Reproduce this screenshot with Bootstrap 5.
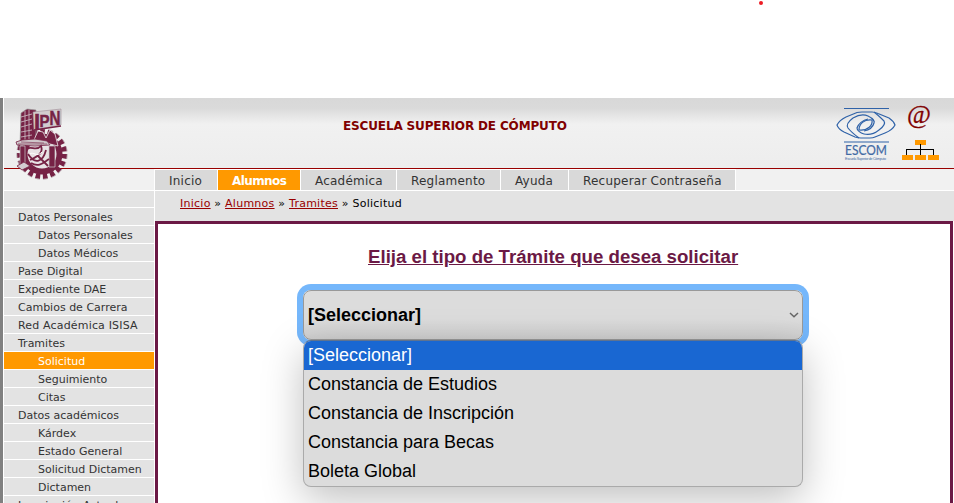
<!DOCTYPE html>
<html lang="es">
<head>
<meta charset="utf-8">
<meta name="viewport" content="width=device-width, initial-scale=1">
<title>Escuela Superior de Cómputo</title>
<link href="https://cdn.jsdelivr.net/npm/bootstrap@5.3.0/dist/css/bootstrap.min.css" rel="stylesheet">
<style>
body{font-family:"DejaVu Sans",sans-serif;font-size:11px;line-height:17px;color:#333;height:503px}
.page-shell{margin-top:98px;height:405px;border-left:3px solid gray;padding-left:1px}
.masthead{height:71px;border-bottom:1px solid #900;background:linear-gradient(#d8d8d8 0,#dadada 10px,#f1f1f1 26px,#ededed 100%)}
.ipn-logo{left:11px;top:10px;z-index:2}
.school{font-size:12px;font-weight:700;color:#800000;left:339px;top:19px;line-height:18px;letter-spacing:-.14px}
.escom-logo{left:831px;top:9px}
.at-link{left:903px;top:0;font:26px/34px "Liberation Serif",serif;color:#800000;-webkit-text-stroke:.3px #800000}
.map-icon{left:898px;top:42px}
.topbar{height:22px;background:#f1f1f1;border-bottom:1px solid #fff;padding-left:150px}
.topnav{border-left:1px solid #fff;border-top:1px solid #fff}
.topnav a{height:20px;line-height:22px;font-size:12px;letter-spacing:.22px;background:#d9d9d9;border-right:1px solid #fff;color:#333;text-decoration:none;white-space:nowrap;padding-left:14px}
.topnav a.on{background:#f90;color:#fff;font-weight:700;letter-spacing:-.6px}
.w1{width:63px}.w2{width:83px}.w3{width:96px}.w4{width:104px}.w5{width:68px}.w6{width:167px}
.side{width:151px;flex:none;background:#e3e3e3;border-right:1px solid #fff}
.side a{display:block;height:18px;border-bottom:1px solid #fff;line-height:19px;color:#333;text-decoration:none;padding-left:14px;white-space:nowrap}
.side a.blank{height:17px}
.side a.sub{padding-left:34px}
.side a.on{background:#f90;color:#fff}
.side a.wide{letter-spacing:.17px}
.crumbs{height:30px;background:#e3e3e3;padding-left:25px;line-height:25px;color:#000;white-space:pre;letter-spacing:.25px}
.crumbs a{color:#900;text-decoration:underline}
.panel{border:3px solid #6b1945;border-bottom:0;background:#fff;margin-right:1px;font-family:"Liberation Sans",Arial,sans-serif;color:#000;font-size:18px}
.ask{font-size:18.67px;line-height:22px;font-weight:700;color:#6b1945;margin:22px 0 0 210px;text-decoration:underline;white-space:nowrap}
.picker{width:500px;height:50px;margin:22px 0 0 145px;border:1px solid #999;border-radius:8px;box-shadow:0 0 0 6px #75b7fb;background:linear-gradient(#dcdcdc 0 60%,#cfcfcf);padding:0 3px 0 4px;font-weight:700}
.options{left:-1px;top:49px;width:500px;height:147px;border:1px solid #aaa;border-top-color:#5f7390;border-radius:8px;background:#dcdcdc;box-shadow:0 12px 40px rgba(0,0,0,.25);font-weight:400;z-index:1}
.options div{height:29px;line-height:29px;padding-left:4px}
.options .chosen{background:#1967d2;color:#fff}
.pen-dot{left:759px;top:1px;width:4px;height:4px;background:#ed1c24}
</style>
<script src="https://cdn.jsdelivr.net/npm/bootstrap@5.3.0/dist/js/bootstrap.bundle.min.js"></script>
</head>
<body class="overflow-hidden bg-white position-relative">
<span class="pen-dot position-absolute rounded-circle"></span>
<div class="page-shell d-flex flex-column overflow-hidden">
<header class="masthead position-relative flex-shrink-0">
<svg class="ipn-logo position-absolute" width="54" height="74" viewBox="0 0 54 74" fill="none">
<!-- gear wheel -->
<circle cx="27" cy="46" r="22.5" stroke="#762245" stroke-width="5" stroke-dasharray="4.6 2.8"/>
<circle cx="27" cy="46" r="17.5" fill="#e8e2e5" stroke="#762245" stroke-width="6"/>
<circle cx="27" cy="46" r="25.2" stroke="#a08b95" stroke-width=".7" stroke-dasharray="5.1 3.2"/>
<!-- tower and lettered sign -->
<path d="M6 5 12 1 21 2V33L5 37Z" fill="#762245" stroke="#999" stroke-width=".7"/>
<path d="M10 3V36M14 2V34M6 9 17 6M6 14 17 11M6 19 17 16M6 24 17 22M6 29 17 27" stroke="#cfc3c9" stroke-width=".8"/>
<path d="M18 4 46 1 46 17 19 22Z" fill="#d3cccf" stroke="#a08b95" stroke-width=".6"/>
<g font-family="Liberation Sans,Arial,sans-serif" font-weight="700" fill="#762245" stroke="#762245" stroke-width=".5"><text x="19" y="21" font-size="22">I</text><text x="24.500" y="19" font-size="17" textLength="10" lengthAdjust="spacingAndGlyphs">P</text><text x="34.500" y="17" font-size="20" textLength="11" lengthAdjust="spacingAndGlyphs">N</text></g>
<path d="M19 22 46 18" stroke="#762245" stroke-width="1.5"/>
<!-- roofs, columns and figures -->
<path d="M18 34 23 23 28 24 31 30 35 22 40 26 43 38 35 36 29 33Z" fill="#762245" stroke="#eee" stroke-width=".8"/>
<path d="M1 34 7 32 20 31 32 33 35 37 20 38 2 37Z" fill="#cfc6ca" stroke="#762245" stroke-width=".8"/>
<path d="M3 36H32M6 34 29 35" stroke="#762245" stroke-width=".6"/>
<path d="M5 38H10V59H5ZM34 38H40V59H34Z" fill="#762245" stroke="#ccc" stroke-width=".7"/>
<path d="M12 41C16 37 21 44 26 38C29 45 22 49 15 52M13 46C20 57 28 54 31 42M22 47 33 58M16 55C24 60 29 54 34 51" stroke="#762245" stroke-width="1.8"/>
<path d="M15 46C18 43 22 50 27 44" stroke="#fff"/>
<path d="M2 58 9 54 15 58 7 62Z" fill="#d3cbd0" stroke="#762245" stroke-width=".8"/>
</svg>
<div class="school position-absolute">ESCUELA SUPERIOR DE CÓMPUTO</div>
<svg class="escom-logo position-absolute" width="62" height="54" viewBox="0 0 62 54" fill="none" stroke="#2f62a8" stroke-width="1.2">
<path d="M9 1.500H54M9 35H54"/>
<path d="M2 18C4 14 7 12 11 10L22 5.500Q24 5 27 5H37Q40 5 43 6.500L54 11C57 13 59 15 60 18C58 22 55 24 50 26L40 30Q38 31 35 31H26Q23 31 20 30L9 25C5 23 3 21 2 18Z"/>
<path d="M39 5C43 8 46 11 49 14C51 17 48 20 44 23C39 27 33 28 29 27C25 26 22 23 22 21C23 17 28 13 33 12M24 31C20 28 16 25 13 21C11 18 14 14 18 11C23 8 29 7 33 9C37 11 40 14 39 16C38 20 34 23 29 24"/>
<path d="M24 23C24 17 29 12 37 13C38 18 33 24 24 23"/>
<text x="10" y="48" fill="#426aa4" stroke="#426aa4" stroke-width=".2" font-family="Lato,sans-serif" font-size="13" textLength="42" lengthAdjust="spacingAndGlyphs">ESCOM</text>
<text x="10" y="52.500" fill="#426aa4" stroke="none" font-family="Liberation Sans,sans-serif" font-size="3.600" textLength="41">Escuela Superior de Cómputo</text>
</svg>
<span class="at-link position-absolute">@</span>
<svg class="map-icon position-absolute" width="37" height="20" viewBox="0 0 37 20" shape-rendering="crispEdges"><path d="M13 0h11v5H13zM0 15h11v5H0zM13 15h11v5H13zM26 15h11v5H26z" fill="#f90"/><path d="M18 4h1v11h-1zM4 9h28v1H4zM4 9h1v6H4zM31 9h1v6h-1z" fill="#000"/></svg>
</header>
<div class="topbar flex-shrink-0"><nav class="topnav d-inline-flex align-top">
<a class="w1" href="#">Inicio</a><a class="w2 on" href="#">Alumnos</a><a class="w3" href="#">Académica</a><a class="w4" href="#">Reglamento</a><a class="w5" href="#">Ayuda</a><a class="w6" href="#">Recuperar Contraseña</a>
</nav></div>
<div class="d-flex flex-grow-1 overflow-hidden">
<nav class="side">
<a class="blank" href="#"></a><a href="#">Datos Personales</a><a class="sub" href="#">Datos Personales</a><a class="sub" href="#">Datos Médicos</a><a href="#">Pase Digital</a><a href="#">Expediente DAE</a><a href="#">Cambios de Carrera</a><a class="wide" href="#">Red Académica ISISA</a><a href="#">Tramites</a><a class="sub on" href="#">Solicitud</a><a class="sub" href="#">Seguimiento</a><a class="sub" href="#">Citas</a><a href="#">Datos académicos</a><a class="sub" href="#">Kárdex</a><a class="sub" href="#">Estado General</a><a class="sub" href="#">Solicitud Dictamen</a><a class="sub" href="#">Dictamen</a><a class="wide" href="#">Inscripción Actual</a>
</nav>
<main class="flex-grow-1 d-flex flex-column">
<div class="crumbs flex-shrink-0"><a href="#">Inicio</a> » <a href="#">Alumnos</a> » <a href="#">Tramites</a> » Solicitud</div>
<section class="panel flex-grow-1">
<h1 class="ask">Elija el tipo de Trámite que desea solicitar</h1>
<div class="picker position-relative d-flex align-items-center justify-content-between"><span>[Seleccionar]</span>
<svg width="10" height="6" viewBox="0 0 10 6" fill="none" stroke="#666" stroke-width="1.500"><path d="M1 1 5 4.700 9 1"/></svg>
<div class="options position-absolute overflow-hidden"><div class="chosen">[Seleccionar]</div><div>Constancia de Estudios</div><div>Constancia de Inscripción</div><div>Constancia para Becas</div><div>Boleta Global</div></div>
</div>
</section>
</main>
</div>
</div>
</body>
</html>
